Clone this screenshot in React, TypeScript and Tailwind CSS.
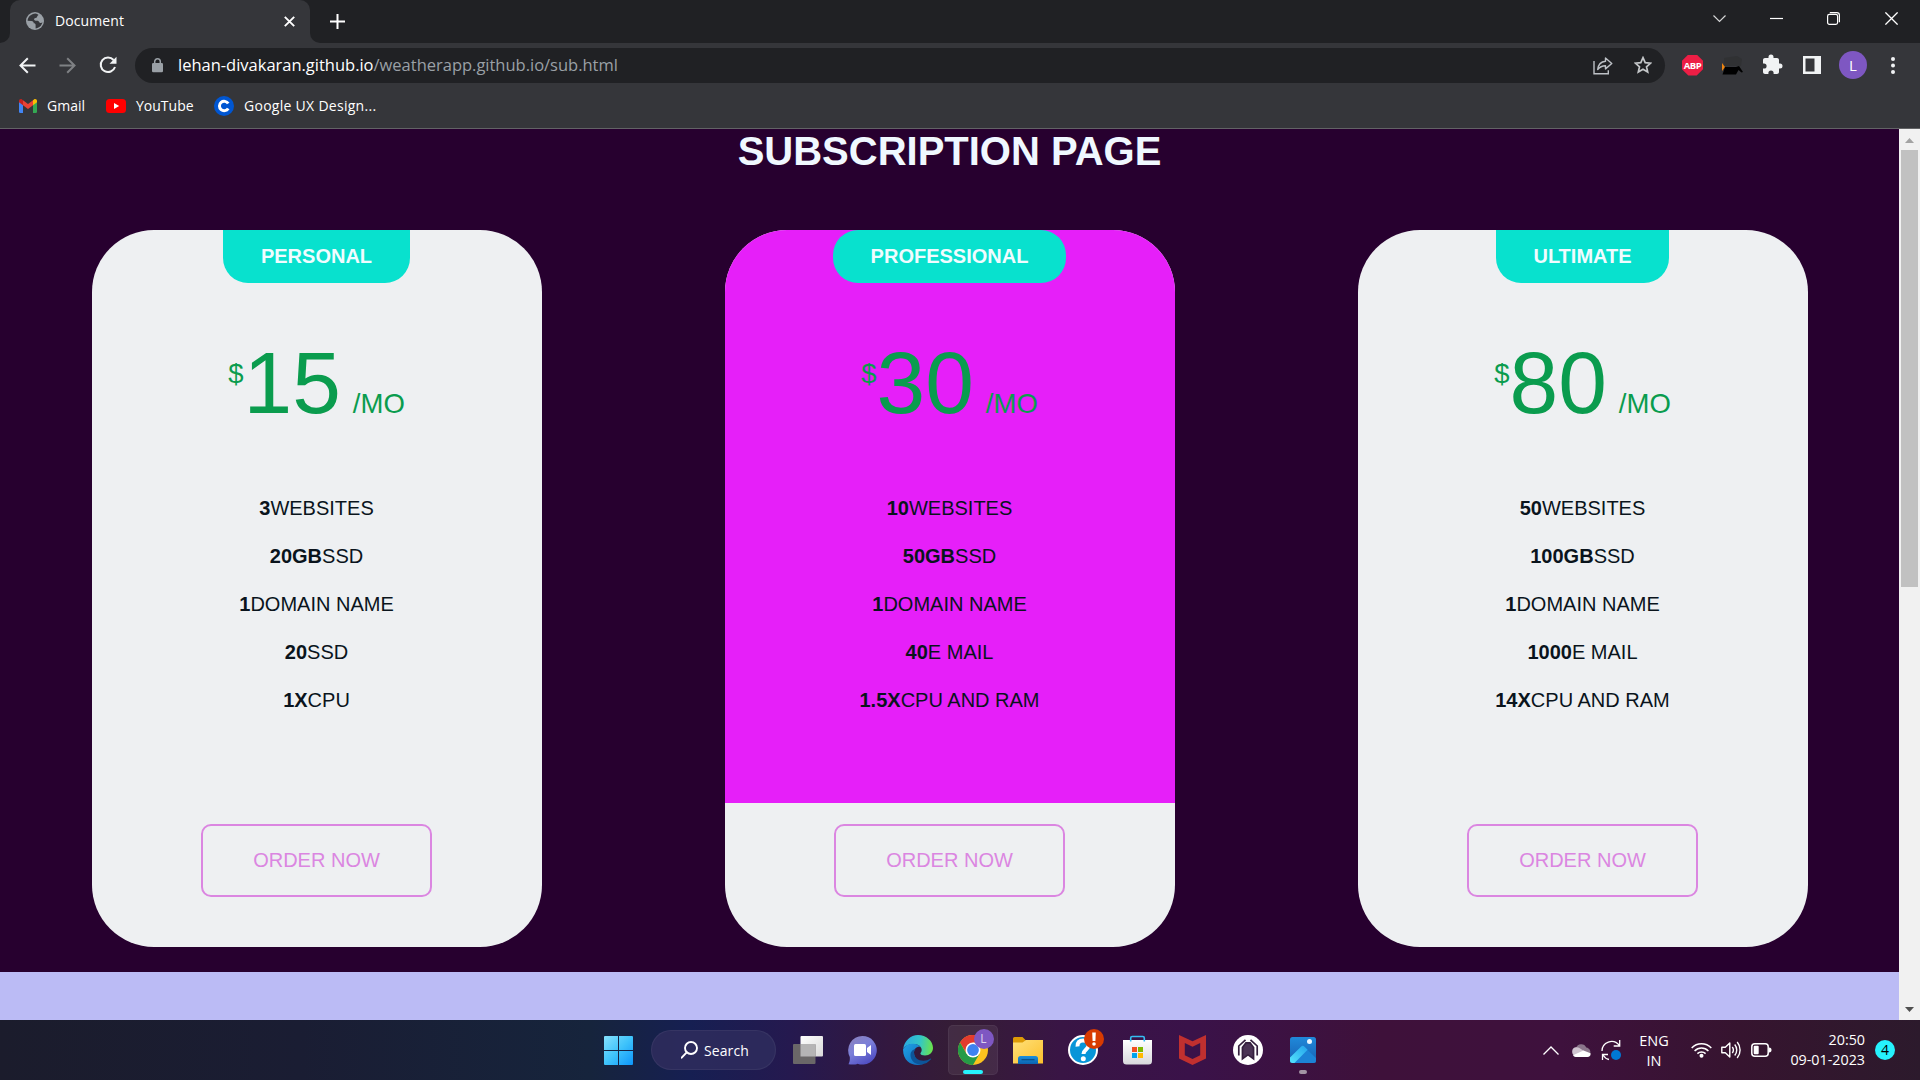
import React from "react";

type Plan = {
  name: string;
  price: string;
  features: [string, string][];
  featured?: boolean;
};

const plans: Plan[] = [
  {
    name: "PERSONAL",
    price: "15",
    features: [["3", "WEBSITES"], ["20GB", "SSD"], ["1", "DOMAIN NAME"], ["20", "SSD"], ["1X", "CPU"]],
  },
  {
    name: "PROFESSIONAL",
    price: "30",
    featured: true,
    features: [["10", "WEBSITES"], ["50GB", "SSD"], ["1", "DOMAIN NAME"], ["40", "E MAIL"], ["1.5X", "CPU AND RAM"]],
  },
  {
    name: "ULTIMATE",
    price: "80",
    features: [["50", "WEBSITES"], ["100GB", "SSD"], ["1", "DOMAIN NAME"], ["1000", "E MAIL"], ["14X", "CPU AND RAM"]],
  },
];

function TabStrip() {
  return (
    <div className="flex h-[43px] items-start bg-[#202124] text-white">
      <div className="h-[43px] w-[10px] bg-[#35363a]">
        <div className="h-full w-full rounded-br-[10px] bg-[#202124]" />
      </div>
      <div className="flex h-[43px] w-[300px] items-center rounded-t-[10px] bg-[#35363a] pb-[1px] pl-4 pr-[15px]">
        <svg width="18" height="18" viewBox="0 0 18 18" className="shrink-0">
          <circle cx="9" cy="9" r="9" fill="#9aa0a6" />
          <path d="M9.500 1.600C5 2 1.900 5 1.600 8.700L5.400 9c1.700 0 2.300 1 2.300 2.200 1.200 0 1.900.5 1.900 1.600v3.600c3.300-.2 6.200-2.800 6.800-6.200-.7.800-1.500 1-2.500.6-1.200-.5-1-1.900-2.300-2-1.300-.1-2.600.2-3.300-.9-.6-1 .1-1.900 1.200-2 1.100 0 1.700-.4 1.700-1.300 0-.8.700-1 1.400-1.500A8 8 0 0 0 9.500 1.600Z" fill="#35363a" />
        </svg>
        <span className="ml-[11px] w-[150px] whitespace-nowrap text-[14px] leading-5 tracking-[0.100px]">Document</span>
        <svg width="11" height="11" viewBox="0 0 11 11" className="ml-auto" stroke="#fff" strokeWidth="1.900">
          <path d="M.8.8 10.200 10.200M10.200.8.8 10.200" />
        </svg>
      </div>
      <div className="h-[43px] w-[10px] bg-[#35363a]">
        <div className="h-full w-full rounded-bl-[10px] bg-[#202124]" />
      </div>
      <svg width="15" height="15" viewBox="0 0 15 15" className="ml-[10px] mt-[14px]" stroke="#fff" strokeWidth="2">
        <path d="M7.500 0v15M0 7.500h15" />
      </svg>
      <div className="ml-auto mr-[22px] flex items-center gap-[44px] pt-[12px]">
        <svg width="13" height="13" viewBox="0 0 13 13" className="-mr-[1px]" fill="none" stroke="#d5d6d7" strokeWidth="1.200">
          <path d="M.5 3.500 6.500 9.500l6-6" />
        </svg>
        <svg width="13" height="13" viewBox="0 0 13 13" className="ml-[1px]" stroke="#fff" strokeWidth="1.200">
          <path d="M0 6.500h13" />
        </svg>
        <svg width="13" height="13" viewBox="0 0 13 13" fill="none" stroke="#fff" strokeWidth="1.200">
          <rect x=".6" y="2.400" width="10" height="10" rx="1.800" />
          <path d="M2.800.6h7a2.600 2.600 0 0 1 2.600 2.600v7" />
        </svg>
        <svg width="13" height="13" viewBox="0 0 13 13" className="ml-[1px]" stroke="#fff" strokeWidth="1.300">
          <path d="m.4.4 12.200 12.200M12.600.4.4 12.600" />
        </svg>
      </div>
    </div>
  );
}

function Toolbar() {
  return (
    <div className="flex h-[45px] items-center bg-[#35363a]">
      <svg width="17" height="17" viewBox="0 0 17 17" className="mb-[1px] ml-[19px]" fill="none" stroke="#f1f3f4" strokeWidth="2">
        <path d="M16.500 8.500H2M8.800 1.300 1.500 8.500l7.300 7.200" />
      </svg>
      <svg width="17" height="17" viewBox="0 0 17 17" className="mb-[1px] ml-[23px]" fill="none" stroke="#7f8184" strokeWidth="2">
        <path d="M.5 8.500H15M8.200 1.300l7.300 7.200-7.300 7.200" />
      </svg>
      <svg width="18" height="18" viewBox="0 0 18 18" className="mb-[2px] ml-[23px]" fill="none">
        <path d="M14.600 4A7.300 7.300 0 1 0 16 11" stroke="#f1f3f4" strokeWidth="2" />
        <path d="M17.500.8v7H10.500Z" fill="#f1f3f4" />
      </svg>
      <div className="ml-[18px] flex h-[35px] w-[1530px] items-center rounded-full bg-[#202124]">
        <svg width="11" height="15" viewBox="0 0 11 15" className="ml-[17px]">
          <rect x="0" y="5" width="11" height="9.300" rx="1.300" fill="#9aa0a6" />
          <path d="M2.700 6V3.600a2.800 2.800 0 0 1 5.600 0V6" fill="none" stroke="#9aa0a6" strokeWidth="1.500" />
        </svg>
        <span className="mb-[1px] ml-[15px] whitespace-nowrap text-[16.500px] leading-6 tracking-[-0.010px] text-[#9aa0a6]">
          <span className="text-white">lehan-divakaran.github.io</span>/weatherapp.github.io/sub.html
        </span>
        <svg width="20" height="18" viewBox="0 0 20 18" className="ml-auto" fill="none" stroke="#bdc1c6" strokeWidth="1.400">
          <path d="M1 4v12.800h14.300v-3.600" />
          <path d="M12.500 1 18.800 6.500l-6.300 5.400V8.700c-3.300 0-5.600.9-7.800 3.800C5.200 8 8 4.800 12.500 4.300Z" strokeLinejoin="round" />
        </svg>
        <svg width="18" height="18" viewBox="0 0 18 18" className="mb-[1px] ml-[21px] mr-[13px]" fill="none" stroke="#c4c7c9" strokeWidth="1.700">
          <path d="m9 1.700 2.200 5 5.400.5-4.100 3.600 1.200 5.300L9 13.300l-4.700 2.800 1.200-5.300L1.400 7.200l5.400-.5Z" />
        </svg>
      </div>
      <div className="mb-[1px] ml-[17px] flex items-center">
        <div className="flex size-[21px] items-center justify-center bg-[#ed1e45] text-[9.500px] font-bold leading-[21px] tracking-[-0.400px] [clip-path:polygon(30%_0,70%_0,100%_30%,100%_70%,70%_100%,30%_100%,0_70%,0_30%)]">
          <span className="text-white">ABP</span>
        </div>
        <svg width="21" height="20" viewBox="0 0 21 20" className="ml-[19px]">
          <path d="M2 3 15 1l5 3-1 7H2Z" fill="#303133" />
          <path d="M0 8l3 4-3 4Z" fill="#f0850f" />
          <path d="M3 12h11l3-1 4 6-1.500.5-3-2.500-2.500 4.500H.5Z" fill="#000" />
        </svg>
        <svg width="24" height="24" viewBox="0 0 24 24" className="ml-[18px]" fill="#f1f3f4">
          <path d="M19 10.500h-1V7c0-1.100-.9-2-2-2h-3.500V4a2.500 2.500 0 0 0-5 0v1H4c-1.100 0-2 .9-2 2v3.400h1a2.600 2.600 0 0 1 0 5.200H2V19c0 1.100.9 2 2 2h3.400v-1a2.600 2.600 0 0 1 5.200 0v1H16c1.100 0 2-.9 2-2v-3.500h1a2.500 2.500 0 0 0 0-5Z" />
        </svg>
        <svg width="18" height="18" viewBox="0 0 18 18" className="ml-[18px] mr-[1px]">
          <path fillRule="evenodd" d="M0 0h18v18H0ZM2.500 2.500v13H11.500v-13Z" fill="#f1f3f4" />
        </svg>
        <div className="ml-[17px] flex size-7 items-center justify-center rounded-full bg-[#7e57c2] text-[15px] text-white">L</div>
        <svg width="4" height="17" viewBox="0 0 4 17" className="ml-[24px]" fill="#f1f3f4">
          <circle cx="2" cy="2" r="2" />
          <circle cx="2" cy="8.500" r="2" />
          <circle cx="2" cy="15" r="2" />
        </svg>
      </div>
    </div>
  );
}

function Bookmarks() {
  return (
    <div className="flex h-[41px] items-center border-b border-[#626365] bg-[#35363a] pb-[5px] pl-[19px] text-[14px] leading-5 text-white">
      <svg width="18" height="14" viewBox="0 0 18 14">
        <path d="M0 2.500 4 5.500V14H1.300A1.300 1.300 0 0 1 0 12.700Z" fill="#4285f4" />
        <path d="M18 2.500 14 5.500V14h2.700a1.300 1.300 0 0 0 1.300-1.300Z" fill="#34a853" />
        <path d="M14 1.200v5l4-3V1.900C18 .3 16.200-.5 15 .4Z" fill="#fbbc04" />
        <path d="M4 6.200v-5L9 5l5-3.800v5L9 10Z" fill="#ea4335" />
        <path d="M0 1.900v1.300l4 3v-5L3 .4C1.800-.5 0 .3 0 1.900Z" fill="#c5221f" />
      </svg>
      <span className="ml-[10px] w-[59px] whitespace-nowrap">Gmail</span>
      <svg width="20" height="14" viewBox="0 0 20 14">
        <rect width="20" height="14" rx="3.500" fill="#f00" />
        <path d="M8 4v6l5.200-3Z" fill="#fff" />
      </svg>
      <span className="ml-[10px] w-[78px] whitespace-nowrap">YouTube</span>
      <svg width="20" height="20" viewBox="0 0 20 20">
        <circle cx="10" cy="10" r="10" fill="#0056d2" />
        <path d="M14.200 7.600A4.700 4.700 0 1 0 14.200 12.400" fill="none" stroke="#fff" strokeWidth="3" />
      </svg>
      <span className="ml-[10px] whitespace-nowrap tracking-[0.280px]">Google UX Design...</span>
    </div>
  );
}

function PlanCard({ plan }: { plan: Plan }) {
  return (
    <article className="flex h-[717px] w-[450px] flex-col items-center overflow-hidden rounded-[62px] bg-[#eef0f2]">
      <div className={"flex h-[573px] w-full flex-col items-center " + (plan.featured ? "bg-[#e61ff9]" : "")}>
        <h2
          className={
            "h-[53px] bg-[#08e1ce] px-[37.5px] pt-[15px] text-[20px] font-bold leading-[23px] text-[#f0fcff] " +
            (plan.featured ? "rounded-[25px]" : "rounded-b-[25px]")
          }
        >
          {plan.name}
        </h2>
        <div className="mt-[55px] flex h-[90px] items-baseline text-[#0a9c4e]">
          <span className="mt-[22px] self-start text-[27.5px] leading-[28px]">$</span>
          <span className="text-[87.5px] leading-[90px]">{plan.price}</span>
          <span className="ml-[12px] text-[27.5px] leading-[28px]">/MO</span>
        </div>
        <ul className="mt-[56px] text-center text-[20px] leading-[48px] text-[#0a141c]">
          {plan.features.map(([amount, label]) => (
            <li key={label + amount}>
              <b>{amount}</b>
              {label}
            </li>
          ))}
        </ul>
      </div>
      <button className="mt-[21px] h-[73px] w-[231px] rounded-[10px] border-2 border-[#db86e1] pb-[1px] text-[20px] leading-[68px] text-[#db86e1]">
        ORDER NOW
      </button>
    </article>
  );
}

function Scrollbar() {
  return (
    <div className="flex w-[21px] flex-col items-center bg-[#f1f1f1]">
      <svg width="9" height="5" viewBox="0 0 9 5" className="mt-[9px]" fill="#a3a3a3">
        <path d="M4.500 0 9 5H0Z" />
      </svg>
      <div className="mt-[7px] h-[437px] w-[17px] bg-[#c1c1c1]" />
      <svg width="9" height="5" viewBox="0 0 9 5" className="mb-[8px] mt-auto" fill="#505050">
        <path d="M4.500 5 9 0H0Z" />
      </svg>
    </div>
  );
}

function Slot({ children }: { children: React.ReactNode }) {
  return <div className="flex h-[60px] w-[55px] items-center justify-center">{children}</div>;
}

function Taskbar() {
  return (
    <footer className="flex h-[60px] items-center bg-[linear-gradient(90deg,#1b1c2c_0px,#1a1d33_300px,#16243c_590px,#161f52_690px,#25194f_790px,#33183f_890px,#351d35_960px,#391545_1060px,#3a1249_1190px,#3e113a_1380px,#3e113d_1560px,#36142f_1740px,#2c1a2c_1920px)] text-white">
      <svg width="29" height="29" viewBox="0 0 29 29" className="ml-[604px] mt-[1px]">
        <defs>
          <linearGradient id="win" x1="0" y1="0" x2="1" y2="1" gradientUnits="objectBoundingBox">
            <stop offset="0" stopColor="#86e1fd" />
            <stop offset=".5" stopColor="#3fc3fb" />
            <stop offset="1" stopColor="#0d95fa" />
          </linearGradient>
        </defs>
        <path d="M1 0h13v14H0V1a1 1 0 0 1 1-1ZM15 0h13a1 1 0 0 1 1 1v13H15ZM0 15h14v14H1a1 1 0 0 1-1-1ZM15 15h14v13a1 1 0 0 1-1 1H15Z" fill="url(#win)" />
      </svg>
      <div className="ml-[18px] flex h-10 w-[125px] items-center rounded-full border border-white/5 bg-[#2d2b5c]/90 pl-[29px]">
        <svg width="17" height="18" viewBox="0 0 17 18" fill="none" stroke="#fff" strokeWidth="1.900">
          <circle cx="10" cy="7" r="6" />
          <path d="M5.700 11.300.7 16.700" strokeLinecap="round" />
        </svg>
        <span className="ml-[6px] mt-[1px] text-[14px] leading-5 tracking-[0.100px]">Search</span>
      </div>
      <div className="ml-[4px] flex">
        <Slot>
          <svg width="30" height="30" viewBox="0 0 30 30">
            <defs>
              <linearGradient id="tv" x1="0" y1="0" x2="1" y2="1">
                <stop offset="0" stopColor="#fff" />
                <stop offset="1" stopColor="#d9d9d9" />
              </linearGradient>
            </defs>
            <rect x="7.500" y="1" width="22.500" height="20.500" rx="1" fill="url(#tv)" />
            <rect x="0" y="9" width="22.500" height="20" rx="1" fill="#6a6768" />
            <rect x="7.500" y="9" width="15" height="12.500" fill="#b5b4b5" />
          </svg>
        </Slot>
        <Slot>
          <svg width="29" height="29" viewBox="0 0 29 29">
            <defs>
              <linearGradient id="chat" x1="0" y1="0" x2=".6" y2="1">
                <stop offset="0" stopColor="#8d82b9" />
                <stop offset=".5" stopColor="#7b7fd9" />
                <stop offset="1" stopColor="#514fc4" />
              </linearGradient>
            </defs>
            <path d="M14.500 0a14.300 14.300 0 1 1-5 27.700C7.500 28.600 5 28.800.5 28.300 1.600 26 2 24.500 1.800 21A14.300 14.300 0 0 1 14.500 0Z" fill="url(#chat)" />
            <rect x="6" y="8" width="12" height="12" rx="1.500" fill="#fff" />
            <path d="m19 12 4-3v10l-4-3Z" fill="#fff" />
          </svg>
        </Slot>
        <Slot>
          <svg width="30" height="30" viewBox="0 0 30 30">
            <defs>
              <linearGradient id="edgeTop" x1="0" y1=".4" x2="1" y2=".5">
                <stop offset="0" stopColor="#2aa9e0" />
                <stop offset=".55" stopColor="#33c6c8" />
                <stop offset="1" stopColor="#6be34a" />
              </linearGradient>
              <linearGradient id="edgeLow" x1="0" y1="0" x2="1" y2="1">
                <stop offset="0" stopColor="#1fa2e6" />
                <stop offset="1" stopColor="#0f66b8" />
              </linearGradient>
            </defs>
            <path d="M.3 13.500C1.300 6 7.500 0 15 0c8.300 0 15 6 15 13 0 4.500-3.500 7.500-8 7.500-2.800 0-4.600-.9-4.600-2 0-.8 1.300-1.300 1.300-3.500 0-3.300-3.400-6-8-6C6 9 2.300 10.700.3 13.500Z" fill="url(#edgeTop)" />
            <path d="M.1 14C2 10.600 5.800 8.800 10.200 8.800c3 0 5.600 1.200 7.200 3-4.200-.5-6.400 2.300-6.400 5.700 0 5.600 4.500 11.500 10 11-8.700 4.300-21.500-.8-20.900-14.500Z" fill="url(#edgeLow)" />
            <path d="M12.600 14c-1 1-1.600 2.200-1.600 3.700 0 4.500 4 8 9.500 8 2.800 0 5-.8 6.700-2 .6-.3 1 .2.600.7A15 15 0 0 1 19.500 29.300C12 30.500 7.500 25 7.500 20c0-3 2-5.500 5.100-6Z" fill="#0d5599" />
          </svg>
        </Slot>
        <Slot>
          <div className="relative flex size-[50px] items-center justify-center rounded-[5px] border border-white/5 bg-white/[0.07]">
            <svg width="30" height="30" viewBox="0 0 30 30">
              <circle cx="15" cy="15" r="15" fill="#fcc31e" />
              <path d="M2 7.500A15 15 0 0 1 28 7.500H15L9 19Z" fill="#e33b2e" />
              <path d="M2 7.500A15 15 0 0 0 15 30l6.500-11.200H8.500Z" fill="#259b47" />
              <circle cx="15" cy="15" r="7.500" fill="#fff" />
              <circle cx="15" cy="15" r="5.900" fill="#3d82f0" />
            </svg>
            <div className="absolute left-[25px] top-[3px] flex size-5 items-center justify-center rounded-full bg-[#7e57c2] text-[12px] leading-none text-[#ddd3ef]">L</div>
            <div className="absolute bottom-0 left-[14px] h-1 w-5 rounded-full bg-[#26f2fd]" />
          </div>
        </Slot>
        <Slot>
          <svg width="30" height="27" viewBox="0 0 30 27">
            <defs>
              <linearGradient id="fold" x1="0" y1="0" x2="1" y2="1">
                <stop offset="0" stopColor="#ffe07a" />
                <stop offset="1" stopColor="#fcc02c" />
              </linearGradient>
              <linearGradient id="tray" x1="0" y1="0" x2="0" y2="1">
                <stop offset="0" stopColor="#1a8fdd" />
                <stop offset="1" stopColor="#0b63b0" />
              </linearGradient>
            </defs>
            <path d="M0 1.500A1.500 1.500 0 0 1 1.500 0h8L13 3.500V8H0Z" fill="#dd9a06" />
            <path d="M0 5.500h9.500L13 3h17v23.500H0Z" fill="url(#fold)" />
            <path d="M5 27v-5.500A2.500 2.500 0 0 1 7.500 19h15a2.500 2.500 0 0 1 2.500 2.500V27Z" fill="url(#tray)" />
            <path d="M8.500 22.700h13" stroke="#084d86" strokeWidth="1.200" />
          </svg>
        </Slot>
        <Slot>
          <div className="relative flex size-[30px] items-center justify-center rounded-full border-2 border-white bg-[#0795d8]">
            <svg width="16" height="24" viewBox="0 0 16 24">
              <path d="M2.500 8.500C2.200 4.500 4.500 2.500 8 2.500s5.600 2 5.600 4.700C13.600 11.500 8.500 11.500 8.500 16" fill="none" stroke="#fff" strokeWidth="4" />
              <circle cx="8.300" cy="20.700" r="2.500" fill="#fff" />
            </svg>
            <div className="absolute -top-[8px] left-[14px] flex size-5 items-center justify-center rounded-full bg-[#d83b01]">
              <svg width="4" height="14" viewBox="0 0 4 14" fill="#fff">
                <path d="M.2.500h3.600L3.400 9H.6Z" />
                <circle cx="2" cy="12" r="1.800" />
              </svg>
            </div>
          </div>
        </Slot>
        <Slot>
          <svg width="29" height="30" viewBox="0 0 29 30">
            <defs>
              <linearGradient id="bag" x1="0" y1="0" x2="0" y2="1">
                <stop offset="0" stopColor="#fff" />
                <stop offset="1" stopColor="#d8d8dc" />
              </linearGradient>
            </defs>
            <path d="M0 5h29v21a3.500 3.500 0 0 1-3.500 3.500h-22A3.500 3.500 0 0 1 0 26Z" fill="url(#bag)" />
            <path d="M7.700 6.500V3a1.500 1.500 0 0 1 1.500-1.500h10.600A1.500 1.500 0 0 1 21.300 3v3.500" fill="none" stroke="#35bdf2" strokeWidth="1.600" />
            <path d="M9 12h5v5H9Z" fill="#f25022" />
            <path d="M15 12h5v5h-5Z" fill="#7fba00" />
            <path d="M9 18h5v5H9Z" fill="#00a4ef" />
            <path d="M15 18h5v5h-5Z" fill="#ffb900" />
          </svg>
        </Slot>
        <Slot>
          <svg width="27" height="30" viewBox="0 0 27 30">
            <path fillRule="evenodd" d="M0 0 13.500 6.200 27 0v23.600L13.500 30 0 23.600ZM5.800 8v12.200l7.700 3.700 7.700-3.700V8l-7.700 3.700Z" fill="#c0302f" />
          </svg>
        </Slot>
        <Slot>
          <svg width="30" height="30" viewBox="0 0 30 30">
            <circle cx="15" cy="15" r="15" fill="#fff" />
            <g fill="none" stroke="#35203e" strokeWidth="1.700">
              <path d="M5.800 20.500V11L12.500 4.800M24.200 20.500V11L17.500 4.800" />
            </g>
            <path d="M8.600 25.500V12.200L12.500 7h5l3.900 5.200v13.300L15 20.800Z" fill="#35203e" />
            <path d="M10.300 22.300v-9.500l3-4h3.400l3 4v9.500L15 19Z" fill="#4b3455" />
          </svg>
        </Slot>
        <Slot>
          <div className="relative">
            <svg width="26" height="26" viewBox="0 0 26 26" className="block">
              <defs>
                <linearGradient id="ph" x1="0" y1="0" x2="0" y2="1">
                  <stop offset="0" stopColor="#2089da" />
                  <stop offset="1" stopColor="#1760b2" />
                </linearGradient>
                <linearGradient id="hill" x1="0" y1="1" x2="1" y2="0">
                  <stop offset="0" stopColor="#54e4fd" />
                  <stop offset="1" stopColor="#24a4ec" />
                </linearGradient>
              </defs>
              <rect width="26" height="26" rx="2.500" fill="url(#ph)" />
              <path d="M2 26 12 12 15 10.500 26 21v2.500A2.500 2.500 0 0 1 23.500 26Z" fill="#1c83d6" />
              <path d="M0 20.500 11 9.800a2.500 2.500 0 0 1 3.600 0l3 3L4.500 26h-2A2.500 2.500 0 0 1 0 23.500Z" fill="url(#hill)" />
              <circle cx="19.500" cy="4.500" r="2.500" fill="#eaf6ff" />
            </svg>
            <div className="absolute left-[9px] top-[33px] h-1 w-2 rounded-full bg-[#a394a4]" />
          </div>
        </Slot>
      </div>
      <div className="ml-auto flex items-center">
        <svg width="16" height="9" viewBox="0 0 16 9" fill="none" stroke="#fff" strokeWidth="1.300">
          <path d="M.5 8.500 8 1l7.500 7.500" />
        </svg>
        <svg width="20" height="14" viewBox="0 0 20 14" className="ml-[12px]">
          <path d="M5 5a5.500 5.500 0 0 1 10.300-.5A4.800 4.800 0 0 1 18.500 12H3Z" fill="#8b768b" />
          <path d="M4.500 4.300A4.500 4.500 0 0 0 4.500 13L13 8 8 4.700a5 5 0 0 0-3.500-.4Z" fill="#cfc4cf" />
          <path d="M2 12.200 12.500 7.400l7 2.800a3.300 3.300 0 0 1-3 3.800H4.500a4 4 0 0 1-2.500-1.800Z" fill="#fff" />
        </svg>
        <svg width="21" height="22" viewBox="0 0 21 22" className="ml-[10px]" fill="none" stroke="#fff" strokeWidth="1.300">
          <path d="M1 12C1 3.500 12-1.500 18.500 6.500M18.700 1v6h-6M8 20.500C5.500 20 3.500 18.500 2 16M1.500 21v-5.500H7" />
          <circle cx="15" cy="16" r="5" fill="#0078d4" stroke="none" />
        </svg>
        <div className="ml-[17px] mt-[1px] w-[30px] text-center text-[14.500px] leading-5 tracking-[-0.050px]">
          <div>ENG</div>
          <div>IN</div>
        </div>
        <svg width="21" height="16" viewBox="0 0 21 16" className="ml-[22px]" fill="none" stroke="#fff" strokeWidth="1.500">
          <path d="M.7 6a13.500 13.500 0 0 1 19.600 0M3.600 8.900a9.600 9.600 0 0 1 13.800 0M6.400 11.600a5.800 5.800 0 0 1 8.200 0" />
          <circle cx="10.500" cy="13.800" r="2" fill="#fff" stroke="none" />
        </svg>
        <svg width="20" height="18" viewBox="0 0 20 18" className="ml-[9px]" fill="none" stroke="#fff" strokeWidth="1.400">
          <path d="M.8 6.300h3.500L8.800 2v14l-4.500-4.300H.8Z" strokeLinejoin="round" />
          <path d="M11.300 6a5 5 0 0 1 0 6M13.700 3.500a8.500 8.500 0 0 1 0 11M16.200 1a12.500 12.500 0 0 1 0 16" />
        </svg>
        <svg width="21" height="14" viewBox="0 0 21 14" className="ml-[10px]">
          <rect x=".8" y=".8" width="16.400" height="12.400" rx="3" fill="none" stroke="#fff" strokeWidth="1.500" />
          <rect x="2.700" y="2.700" width="5" height="8.600" rx="1" fill="#fff" />
          <path d="M18 4.500c1.800.2 2.500 1 2.500 2.500S19.800 9.300 18 9.500Z" fill="#fff" />
        </svg>
        <div className="ml-[13px] w-[80px] whitespace-nowrap text-right text-[14.300px] leading-5">
          <div>20:50</div>
          <div>09-01-2023</div>
        </div>
        <div className="ml-[10px] mr-[25px] flex size-5 items-center justify-center rounded-full bg-[#26f2fd] text-[14px] leading-none text-black">4</div>
      </div>
    </footer>
  );
}

export default function App() {
  return (
    <div className="flex h-[1080px] w-[1920px] flex-col overflow-hidden font-['Open_Sans',sans-serif]">
      <header>
        <TabStrip />
        <Toolbar />
        <Bookmarks />
      </header>
      <div className="flex h-[891px]">
        <main className="w-[1899px] font-['Liberation_Sans',Arial,sans-serif]">
          <section className="h-[843px] bg-[#27002f]">
            <h1 className="text-center text-[40px] font-bold leading-[44px] text-[#f0f8ff]">SUBSCRIPTION PAGE</h1>
            <div className="grid grid-cols-3 justify-items-center pt-[57px]">
              {plans.map((plan) => (
                <PlanCard key={plan.name} plan={plan} />
              ))}
            </div>
          </section>
          <section className="h-[48px] bg-[#bbbbf5]" />
        </main>
        <Scrollbar />
      </div>
      <Taskbar />
    </div>
  );
}
